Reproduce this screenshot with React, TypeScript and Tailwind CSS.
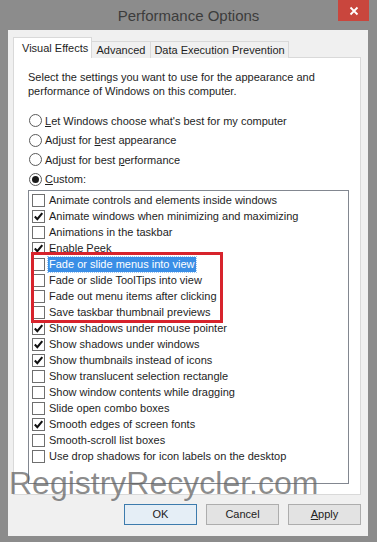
import React from "react";

type Opt = { label: string; checked: boolean; selected?: boolean };

const effects: Opt[] = [
  { label: "Animate controls and elements inside windows", checked: false },
  { label: "Animate windows when minimizing and maximizing", checked: true },
  { label: "Animations in the taskbar", checked: false },
  { label: "Enable Peek", checked: true },
  { label: "Fade or slide menus into view", checked: false, selected: true },
  { label: "Fade or slide ToolTips into view", checked: false },
  { label: "Fade out menu items after clicking", checked: false },
  { label: "Save taskbar thumbnail previews", checked: false },
  { label: "Show shadows under mouse pointer", checked: true },
  { label: "Show shadows under windows", checked: true },
  { label: "Show thumbnails instead of icons", checked: true },
  { label: "Show translucent selection rectangle", checked: false },
  { label: "Show window contents while dragging", checked: false },
  { label: "Slide open combo boxes", checked: false },
  { label: "Smooth edges of screen fonts", checked: true },
  { label: "Smooth-scroll list boxes", checked: false },
  { label: "Use drop shadows for icon labels on the desktop", checked: false },
];

function CheckBox({ checked }: { checked: boolean }) {
  return (
    <div className="w-[13px] h-[13px] border border-[#6f6f6f] bg-white shrink-0 flex items-center justify-center">
      {checked && (
        <svg width="11" height="11" viewBox="0 0 11 11">
          <path d="M1.8 5.6 L4.3 8.2 L9.3 2.2" stroke="#111" strokeWidth="2.1" fill="none" />
        </svg>
      )}
    </div>
  );
}

function Radio({ on, children }: { on?: boolean; children: React.ReactNode }) {
  return (
    <div className="flex items-center h-[19.5px]">
      <div className="w-[13px] h-[13px] rounded-full border border-[#5a5a5a] bg-white flex items-center justify-center mr-[3px]">
        {on && <div className="w-[7px] h-[7px] rounded-full bg-[#1a1a1a]" />}
      </div>
      <span>{children}</span>
    </div>
  );
}

function Btn({ children, main }: { children: React.ReactNode; main?: boolean }) {
  return (
    <div
      className={
        main
          ? "w-[73px] h-[21px] border border-[#3d7bad] bg-[#e5eef6] flex items-center justify-center text-[#222]"
          : "w-[73px] h-[21px] border border-[#adadad] bg-[#e3e3e3] flex items-center justify-center text-[#222]"
      }
    >
      {children}
    </div>
  );
}

export default function App() {
  return (
    <div
      className="w-[377px] h-[542px] bg-[#8c8c8c] flex flex-col relative overflow-hidden text-[11px] text-[#1e1e1e] whitespace-nowrap"
      style={{ fontFamily: '"Liberation Sans", Arial, sans-serif' }}
    >
      {/* title bar */}
      <div className="h-[30px] flex shrink-0">
        <div className="w-[39px]" />
        <div className="flex-1 text-center text-[15px] text-[#3c3c3c] leading-[31px]">Performance Options</div>
        <div className="w-[31px] h-[21px] bg-[#c9463d] flex items-center justify-center">
          <svg width="10" height="10" viewBox="0 0 10 10">
            <path d="M1.5 1.5 L8.5 8.5 M8.5 1.5 L1.5 8.5" stroke="#fff" strokeWidth="1.8" />
          </svg>
        </div>
        <div className="w-[8px]" />
      </div>

      {/* body */}
      <div className="flex-1 ml-[8px] mr-[9px] mb-[6px] bg-[#f0f0f0] flex flex-col pl-[5px] pr-[7px] pt-[8px]">
        {/* tabs */}
        <div className="flex items-end h-[20px] relative z-10">
          <div className="w-[79px] h-[21px] bg-white border border-[#d9d9d9] border-b-0 pl-[8px] leading-[20px]">
            Visual Effects
          </div>
          <div className="w-[59px] h-[17px] bg-[#f0f0f0] border border-[#d9d9d9] border-l-0 border-b-0 flex items-center justify-center">
            Advanced
          </div>
          <div className="w-[138px] h-[17px] bg-[#f0f0f0] border border-[#d9d9d9] border-l-0 border-b-0 flex items-center justify-center">
            Data Execution Prevention
          </div>
        </div>
        <div className="h-[438px] bg-white border border-[#d9d9d9] -mt-px pl-[14px] pr-[11px] pt-[12px]">
          <p className="leading-[14px]">
            Select the settings you want to use for the appearance and
            <br />
            performance of Windows on this computer.
          </p>
          <div className="mt-[13px] pl-[1px]">
            <Radio>
              <span className="underline">L</span>et Windows choose what's best for my computer
            </Radio>
            <Radio>
              Adjust for <span className="underline">b</span>est appearance
            </Radio>
            <Radio>
              Adjust for best <span className="underline">p</span>erformance
            </Radio>
            <Radio on>
              <span className="underline">C</span>ustom:
            </Radio>
          </div>
          <div className="mt-[1px] h-[294px] border border-[#828790] pt-px pl-[3px]">
            {effects.map((e) => (
              <div key={e.label} className="h-[16px] flex items-center">
                <CheckBox checked={e.checked} />
                <span
                  className={
                    e.selected
                      ? "ml-[3px] px-[1px] bg-[#3a8ee6] text-white leading-[15px] outline outline-dotted outline-1 outline-[#9cc4ee]"
                      : "ml-[4px]"
                  }
                >
                  {e.label}
                </span>
              </div>
            ))}
          </div>
        </div>

        {/* buttons */}
        <div className="flex justify-end gap-[9px] mt-[9px]">
          <Btn main>OK</Btn>
          <Btn>Cancel</Btn>
          <Btn>
            <span>
              <span className="underline">A</span>pply
            </span>
          </Btn>
        </div>
      </div>

      {/* highlight box drawn over the list */}
      <div className="absolute left-[31px] top-[252px] w-[192px] h-[71px] border-[3px] border-[#d7232c] pointer-events-none" />

      {/* watermark */}
      <div
        className="absolute left-[9px] top-[467px] text-[32px] leading-none text-[rgba(95,95,95,0.72)] pointer-events-none"
        style={{ fontFamily: '"Liberation Sans", Arial, sans-serif' }}
      >
        RegistryRecycler.com
      </div>
    </div>
  );
}
